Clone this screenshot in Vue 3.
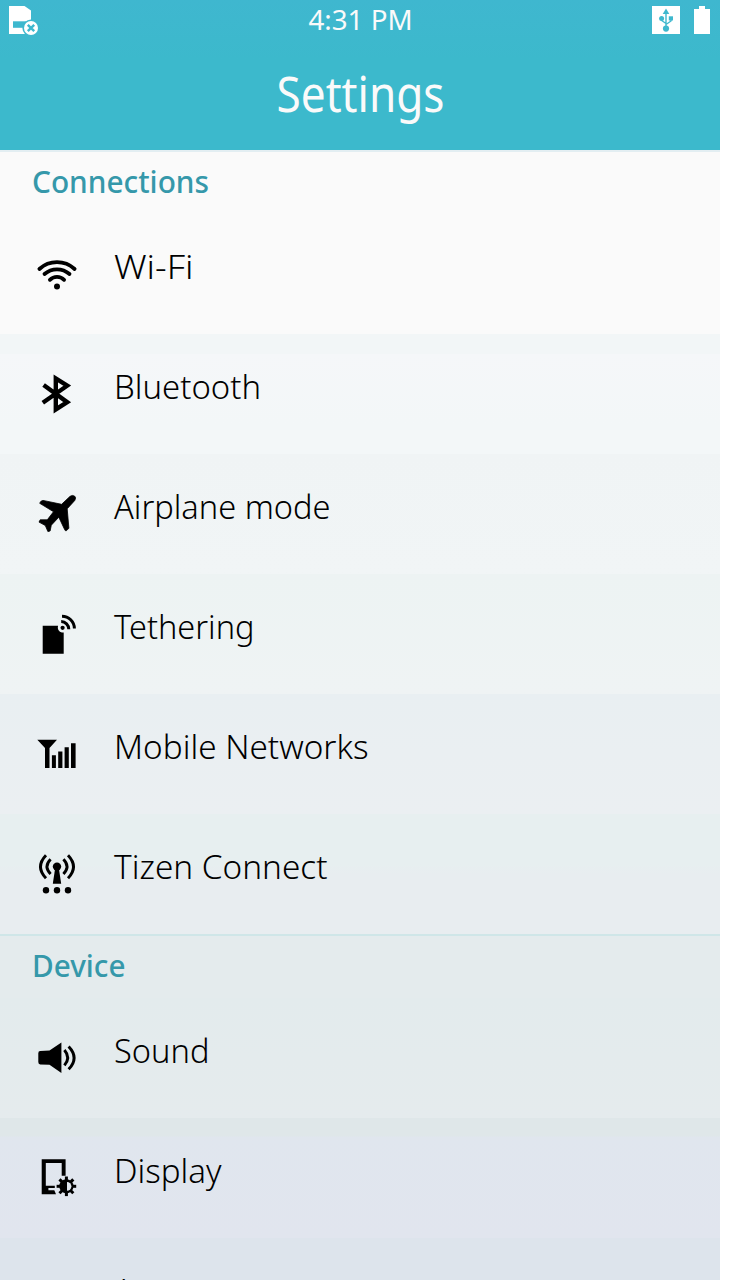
<script setup>
const connections = [
  { icon: 'wifi', label: 'Wi-Fi', w: 79.5 },
  { icon: 'bluetooth', label: 'Bluetooth', w: 147 },
  { icon: 'airplane', label: 'Airplane mode', w: 216.5 },
  { icon: 'tethering', label: 'Tethering', w: 140.5 },
  { icon: 'mobile', label: 'Mobile Networks', w: 254.5 },
  { icon: 'tizen', label: 'Tizen Connect', w: 213.5 },
]
const device = [
  { icon: 'sound', label: 'Sound', w: 95.5 },
  { icon: 'display', label: 'Display', w: 107.5 },
  { icon: 'apps', label: 'Apps', w: 72 },
]
const sections = [
  { title: 'Connections', w: 177, rows: connections },
  { title: 'Device', w: 93.5, rows: device },
]
const teeth = [0, 45, 90, 135, 180, 225, 270, 315]
</script>

<template>
  <main class="phone">
    <header class="top">
      <div class="status">
        <svg class="status-card" width="40" height="40" viewBox="0 0 40 40">
          <path fill="#fff" d="M9 6H24.5L31 10.5V34H9Z" />
          <path fill="#3eb8ce" d="M13 21.3H26V27.8H13Z" />
          <circle cx="31" cy="28" r="8.6" fill="#3eb8ce" />
          <circle cx="31" cy="28" r="7" fill="#fff" />
          <path d="M27.8 24.8L34.2 31.2M34.2 24.8L27.8 31.2" stroke="#3eb8ce" stroke-width="2.4" />
        </svg>
        <svg class="clock" width="120" height="40">
          <text x="8.5" y="30" font-size="28" textLength="104" lengthAdjust="spacingAndGlyphs">4:31 PM</text>
        </svg>
        <svg class="status-right" width="80" height="40" viewBox="640 0 80 40">
          <path fill="#fff" d="M652 6h28v28h-28zM694 9h5V6h6v3h5v25h-16z" />
          <g fill="#3eb8ce" stroke="none">
            <path d="M666 8.5L669.3 14H662.7Z" />
            <circle cx="666" cy="28.6" r="3.1" />
            <circle cx="661.6" cy="18.6" r="2.5" />
            <path d="M668.8 16.3h4.2v4.2h-4.2z" />
          </g>
          <path d="M666 13V27M661.6 19V20.5L666 23.5M671 20V21L666 24.5" fill="none" stroke="#3eb8ce" stroke-width="1.4" />
        </svg>
      </div>
      <h1 class="title">
        <svg width="180" height="90">
          <text x="6.5" y="58" font-size="48.5" textLength="168" lengthAdjust="spacingAndGlyphs">Settings</text>
        </svg>
      </h1>
    </header>

    <section v-for="s in sections" :key="s.title" class="section">
      <h2 class="heading">
        <svg width="240" height="60">
          <text x="0" y="41" font-size="31" :textLength="s.w" lengthAdjust="spacingAndGlyphs">{{ s.title }}</text>
        </svg>
      </h2>
      <div v-for="r in s.rows" :key="r.label" class="row" :class="r.icon">
        <svg class="icon" width="48" height="48" viewBox="0 0 48 48">
          <g v-if="r.icon === 'wifi'">
            <g fill="none" stroke="#000" stroke-width="3.8" stroke-linecap="round">
              <path d="M6.4 19A25.9 25.9 0 0 1 41.6 19" />
              <path d="M11.5 24A18.9 18.9 0 0 1 36.5 24" />
              <path d="M16.9 29.8A10 10 0 0 1 31.1 29.8" />
            </g>
            <circle cx="24" cy="36.4" r="3" />
          </g>
          <path v-else-if="r.icon === 'bluetooth'" d="M10.6 15L34.2 32.2L22.8 39.4V8.4L34.2 15.7L9.8 32.8" fill="none" stroke="#000" stroke-width="4.4" />
          <path
            v-else-if="r.icon === 'airplane'"
            stroke="#000"
            stroke-width=".8"
            stroke-linejoin="round"
            d="M37.1 6.3L28.6 14.3L10 10.4Q7.5 10.6 6.7 13.3L20.5 21.7L14.3 29.8L7.2 29.8L6 32.1L12.3 35.5L14.9 41.6L17.1 41L18.3 35.2L25.8 27.2L31.7 39.7Q32.2 41 33.2 40.8L35.9 38.3L34.2 18.8L41.8 10.4Q43.4 7.6 41.7 6.2Q39.5 4.6 37.1 6.3Z"
          />
          <g v-else-if="r.icon === 'tethering'">
            <path d="M9.7 15.8H25.1A5 5 0 0 0 30.7 22.4V43.7H9.7Z" />
            <circle cx="29.6" cy="17.8" r="2.1" />
            <path d="M28.2 11.6A7.6 7.6 0 0 1 35.8 19.2M29 6.2A12.4 12.4 0 0 1 41.4 18.4" fill="none" stroke="#000" stroke-width="3" />
          </g>
          <path v-else-if="r.icon === 'mobile'" d="M4.3 9.8H24L16.5 18V38H12V18ZM18.9 25.2h4V38h-4zM25.2 21.6h4.2V38h-4.2zM31.6 17.3h4.2V38h-4.2zM38 13.2h4.6V38h-4.6z" />
          <g v-else-if="r.icon === 'tizen'">
            <circle cx="24" cy="16.6" r="4.2" />
            <path d="M22.2 18H25.8L28.2 33.8H19.8Z" />
            <path d="M17.6 9.3Q10.4 16.5 17.6 24M30.4 9.3Q37.6 16.5 30.4 24M13 5.3Q2 16.8 13 28.3M35 5.3Q46 16.8 35 28.3" fill="none" stroke="#000" stroke-width="2.9" />
            <circle cx="13" cy="40.3" r="3.2" />
            <circle cx="24" cy="40.3" r="3.2" />
            <circle cx="35" cy="40.3" r="3.2" />
          </g>
          <g v-else-if="r.icon === 'sound'">
            <path d="M7.2 17L16.5 16.5L28.4 8.6V39L16.5 30.8L7.2 30.4Q5.3 30.2 5.3 28V19.2Q5.3 17 7.2 17Z" />
            <path d="M31.4 16Q38 23.7 31.4 31.4M35.6 12.4Q46.6 23.9 35.6 35.3" fill="none" stroke="#000" stroke-width="2.9" />
          </g>
          <g v-else-if="r.icon === 'display'">
            <path d="M8.7 5.2H32.6V21.7H28.7V9H12.8V31.8H21.8V34H15.4V36.2H21.3L23 40.3H8.7Z" />
            <rect v-for="a in teeth" :key="a" x="31.9" y="22.5" width="3" height="5" :transform="`rotate(${a} 33.4 32.3)`" />
            <circle cx="33.4" cy="32.3" r="5.7" stroke="#000" stroke-width="2.8" />
            <path d="M34 27.9A4.3 4.3 0 0 1 34 36.7Z" fill="#e0e6ee" />
          </g>
        </svg>
        <svg class="label" width="300" height="120">
          <text x="0" y="65" font-size="33.5" :textLength="r.w" lengthAdjust="spacingAndGlyphs">{{ r.label }}</text>
        </svg>
      </div>
    </section>
  </main>
</template>

<style>
html,
body {
  background: #fff;
  overflow: hidden;
}
</style>

<style scoped>
.phone {
  width: 720px;
  height: 1280px;
  overflow: hidden;
  font-family: 'Noto Sans', 'Open Sans', sans-serif;
}
svg {
  display: block;
  flex: none;
  overflow: visible;
}
.top {
  height: 150px;
  background: linear-gradient(#3fb7cf, #3cb9cc 60px);
  fill: #fafafa;
}
.status {
  display: flex;
  justify-content: space-between;
  height: 40px;
}
.status-card {
  margin-right: 40px;
}
.title {
  display: flex;
  justify-content: center;
  margin: 14px 0 0;
  font-weight: 400;
}
.heading {
  box-sizing: border-box;
  height: 64px;
  margin: 0;
  padding-left: 32px;
  border-top: 2px solid #e3eef2;
  background: #fafafa;
  font-weight: 500;
  fill: #3598aa;
}
.section + .section .heading {
  border-top-color: #cfe6e8;
  background: #e4ebed;
}
.row {
  display: flex;
  height: 120px;
  padding-left: 33px;
}
.icon {
  margin-top: 36px;
}
.label {
  margin-left: 33px;
  font-weight: 300;
}
.wifi {
  background: #fafafa;
}
.bluetooth {
  background: linear-gradient(#f2f6f7 20px, #f5f7f9 20px, #f3f7f8 90px);
}
.airplane {
  background: linear-gradient(#f0f4f5, #f1f5f6);
}
.tethering {
  background: linear-gradient(#edf3f3, #eff3f4);
}
.mobile {
  background: linear-gradient(#e9eff2, #ebeff2);
}
.tizen {
  background: linear-gradient(#e7eff0 50px, #e8edf0 60px);
}
.sound {
  background: linear-gradient(#e3ebed, #e5ebed);
}
.display {
  background: linear-gradient(#dfe7e9 18px, #e0e6ee 19px, #e1e5ee);
}
.apps {
  background: #dde4ec;
}
</style>
